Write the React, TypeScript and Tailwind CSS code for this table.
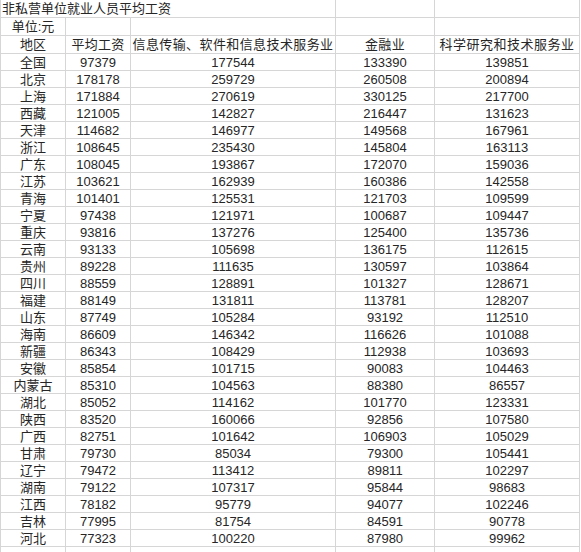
import React from "react";

const rows: [string, string, string, string, string][] = [
  ["全国", "97379", "177544", "133390", "139851"],
  ["北京", "178178", "259729", "260508", "200894"],
  ["上海", "171884", "270619", "330125", "217700"],
  ["西藏", "121005", "142827", "216447", "131623"],
  ["天津", "114682", "146977", "149568", "167961"],
  ["浙江", "108645", "235430", "145804", "163113"],
  ["广东", "108045", "193867", "172070", "159036"],
  ["江苏", "103621", "162939", "160386", "142558"],
  ["青海", "101401", "125531", "121703", "109599"],
  ["宁夏", "97438", "121971", "100687", "109447"],
  ["重庆", "93816", "137276", "125400", "135736"],
  ["云南", "93133", "105698", "136175", "112615"],
  ["贵州", "89228", "111635", "130597", "103864"],
  ["四川", "88559", "128891", "101327", "128671"],
  ["福建", "88149", "131811", "113781", "128207"],
  ["山东", "87749", "105284", "93192", "112510"],
  ["海南", "86609", "146342", "116626", "101088"],
  ["新疆", "86343", "108429", "112938", "103693"],
  ["安徽", "85854", "101715", "90083", "104463"],
  ["内蒙古", "85310", "104563", "88380", "86557"],
  ["湖北", "85052", "114162", "101770", "123331"],
  ["陕西", "83520", "160066", "92856", "107580"],
  ["广西", "82751", "101642", "106903", "105029"],
  ["甘肃", "79730", "85034", "79300", "105441"],
  ["辽宁", "79472", "113412", "89811", "102297"],
  ["湖南", "79122", "107317", "95844", "98683"],
  ["江西", "78182", "95779", "94077", "102246"],
  ["吉林", "77995", "81754", "84591", "90778"],
  ["河北", "77323", "100220", "87980", "99962"],
];

const cell = "border border-[#d6d6d6] p-0 text-center whitespace-nowrap overflow-hidden leading-none";

export default function App() {
  return (
    <div
      className="w-[581px] h-[552px] overflow-hidden bg-white text-[13px] text-[#262626]"
      style={{ fontFamily: '"Liberation Sans", "Noto Sans CJK SC", sans-serif' }}
    >
      <table className="table-fixed border-collapse w-[579px] -mt-px">
        <colgroup>
          <col className="w-[65px]" />
          <col className="w-[65px]" />
          <col className="w-[205px]" />
          <col className="w-[99px]" />
          <col className="w-[145px]" />
        </colgroup>
        <tbody>
          <tr className="h-[18px]">
            <td colSpan={3} className={cell + " text-left pl-[1px]"}>
              非私营单位就业人员平均工资
            </td>
            <td className={cell}></td>
            <td className={cell}></td>
          </tr>
          <tr className="h-[18px]">
            <td className={cell}>单位:元</td>
            <td className={cell}></td>
            <td className={cell}></td>
            <td className={cell}></td>
            <td className={cell}></td>
          </tr>
          <tr className="h-[18px]">
            <td className={cell}>地区</td>
            <td className={cell + " tracking-[0.3px]"}>平均工资</td>
            <td className={cell + " tracking-[0.4px]"}>信息传输、软件和信息技术服务业</td>
            <td className={cell + " tracking-[0.4px]"}>金融业</td>
            <td className={cell + " tracking-[0.5px]"}>科学研究和技术服务业</td>
          </tr>
          {rows.map((r) => (
            <tr key={r[0]} className="h-[17px]">
              {r.map((v, i) => (
                <td key={i} className={cell}>
                  {v}
                </td>
              ))}
            </tr>
          ))}
          <tr className="h-[17px]">
            <td className={cell}></td>
            <td className={cell}></td>
            <td className={cell}></td>
            <td className={cell}></td>
            <td className={cell}></td>
          </tr>
        </tbody>
      </table>
    </div>
  );
}
